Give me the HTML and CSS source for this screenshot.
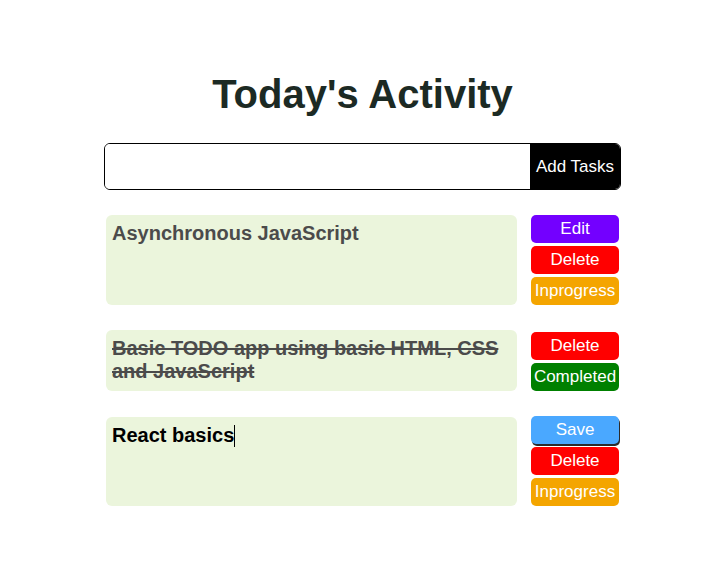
FILE: index.html
```html
<!DOCTYPE html>
<html lang="en">
<head>
<meta charset="utf-8">
<title>Today's Activity</title>
<link rel="stylesheet" href="styles.css">
</head>
<body>
<div class="page">
  <main class="app">
    <h1 class="title">Today's Activity</h1>
    <form class="add-form">
      <input class="add-input" type="text" aria-label="New task">
      <button class="add-btn" type="button">Add Tasks</button>
    </form>
    <ul class="tasks">
      <li class="task">
        <div class="task-text">Asynchronous JavaScript</div>
        <div class="actions">
          <button class="btn btn-edit" type="button">Edit</button>
          <button class="btn btn-delete" type="button">Delete</button>
          <button class="btn btn-progress" type="button">Inprogress</button>
        </div>
      </li>
      <li class="task">
        <div class="task-text task-done">Basic TODO app using basic HTML, CSS and JavaScript</div>
        <div class="actions actions-offset">
          <button class="btn btn-delete" type="button">Delete</button>
          <button class="btn btn-completed" type="button">Completed</button>
        </div>
      </li>
      <li class="task">
        <div class="task-text task-editing">React basics<span class="caret"></span></div>
        <div class="actions">
          <button class="btn btn-save" type="button">Save</button>
          <button class="btn btn-delete" type="button">Delete</button>
          <button class="btn btn-progress" type="button">Inprogress</button>
        </div>
      </li>
    </ul>
  </main>
</div>
</body>
</html>
```

FILE: styles.css
```css
* { box-sizing: border-box; }

html, body {
  margin: 0;
  padding: 0;
  background: #ffffff;
  font-family: "Liberation Sans", Arial, sans-serif;
}

.page {
  padding-left: 19px;
}

.app {
  width: 517px;
  margin: 0 auto;
  padding-top: 72px;
}

.title {
  margin: 0;
  text-align: center;
  font-size: 40px;
  line-height: 45px;
  font-weight: 700;
  color: #1c2a24;
}

.add-form {
  display: flex;
  margin-top: 26px;
  height: 47px;
  border: 1px solid #000;
  border-radius: 6px;
  overflow: hidden;
}

.add-input {
  flex: 1;
  border: none;
  outline: none;
  margin: 0;
  padding: 0 8px;
  font-size: 17px;
  font-family: inherit;
  background: #fff;
}

.add-btn {
  width: 90px;
  border: none;
  margin: 0;
  padding: 0;
  background: #000;
  color: #fff;
  font-family: inherit;
  font-size: 17px;
}

.tasks {
  list-style: none;
  margin: 25px 0 0;
  padding: 0 2px;
  display: flex;
  flex-direction: column;
  gap: 25px;
}

.task {
  display: flex;
  align-items: stretch;
  gap: 14px;
}

.task-text {
  flex: 1;
  background: #ebf5dc;
  border-radius: 6px;
  padding: 7px 6px 6px;
  font-size: 20px;
  line-height: 23px;
  font-weight: 700;
  color: #4b4b4b;
}

.task-done {
  text-decoration: line-through;
}

.task-editing {
  color: #000;
  margin-top: 1px;
}

.caret {
  display: inline-block;
  width: 1px;
  height: 22px;
  background: #000;
  vertical-align: -5px;
}

.actions {
  width: 88px;
  display: flex;
  flex-direction: column;
  gap: 3px;
}

.actions-offset {
  margin-top: 2px;
}

.btn {
  height: 28px;
  border: none;
  border-radius: 5px;
  margin: 0;
  padding: 0;
  color: #fff;
  font-family: inherit;
  font-size: 17px;
  line-height: 28px;
}

.btn-edit { background: #7300ff; }
.btn-delete { background: #ff0000; }
.btn-progress { background: #f4a500; }
.btn-completed { background: #008000; }
.btn-save {
  background: #4aa8ff;
  box-shadow: 1px 2px 0 #2b2b2b;
}
```
